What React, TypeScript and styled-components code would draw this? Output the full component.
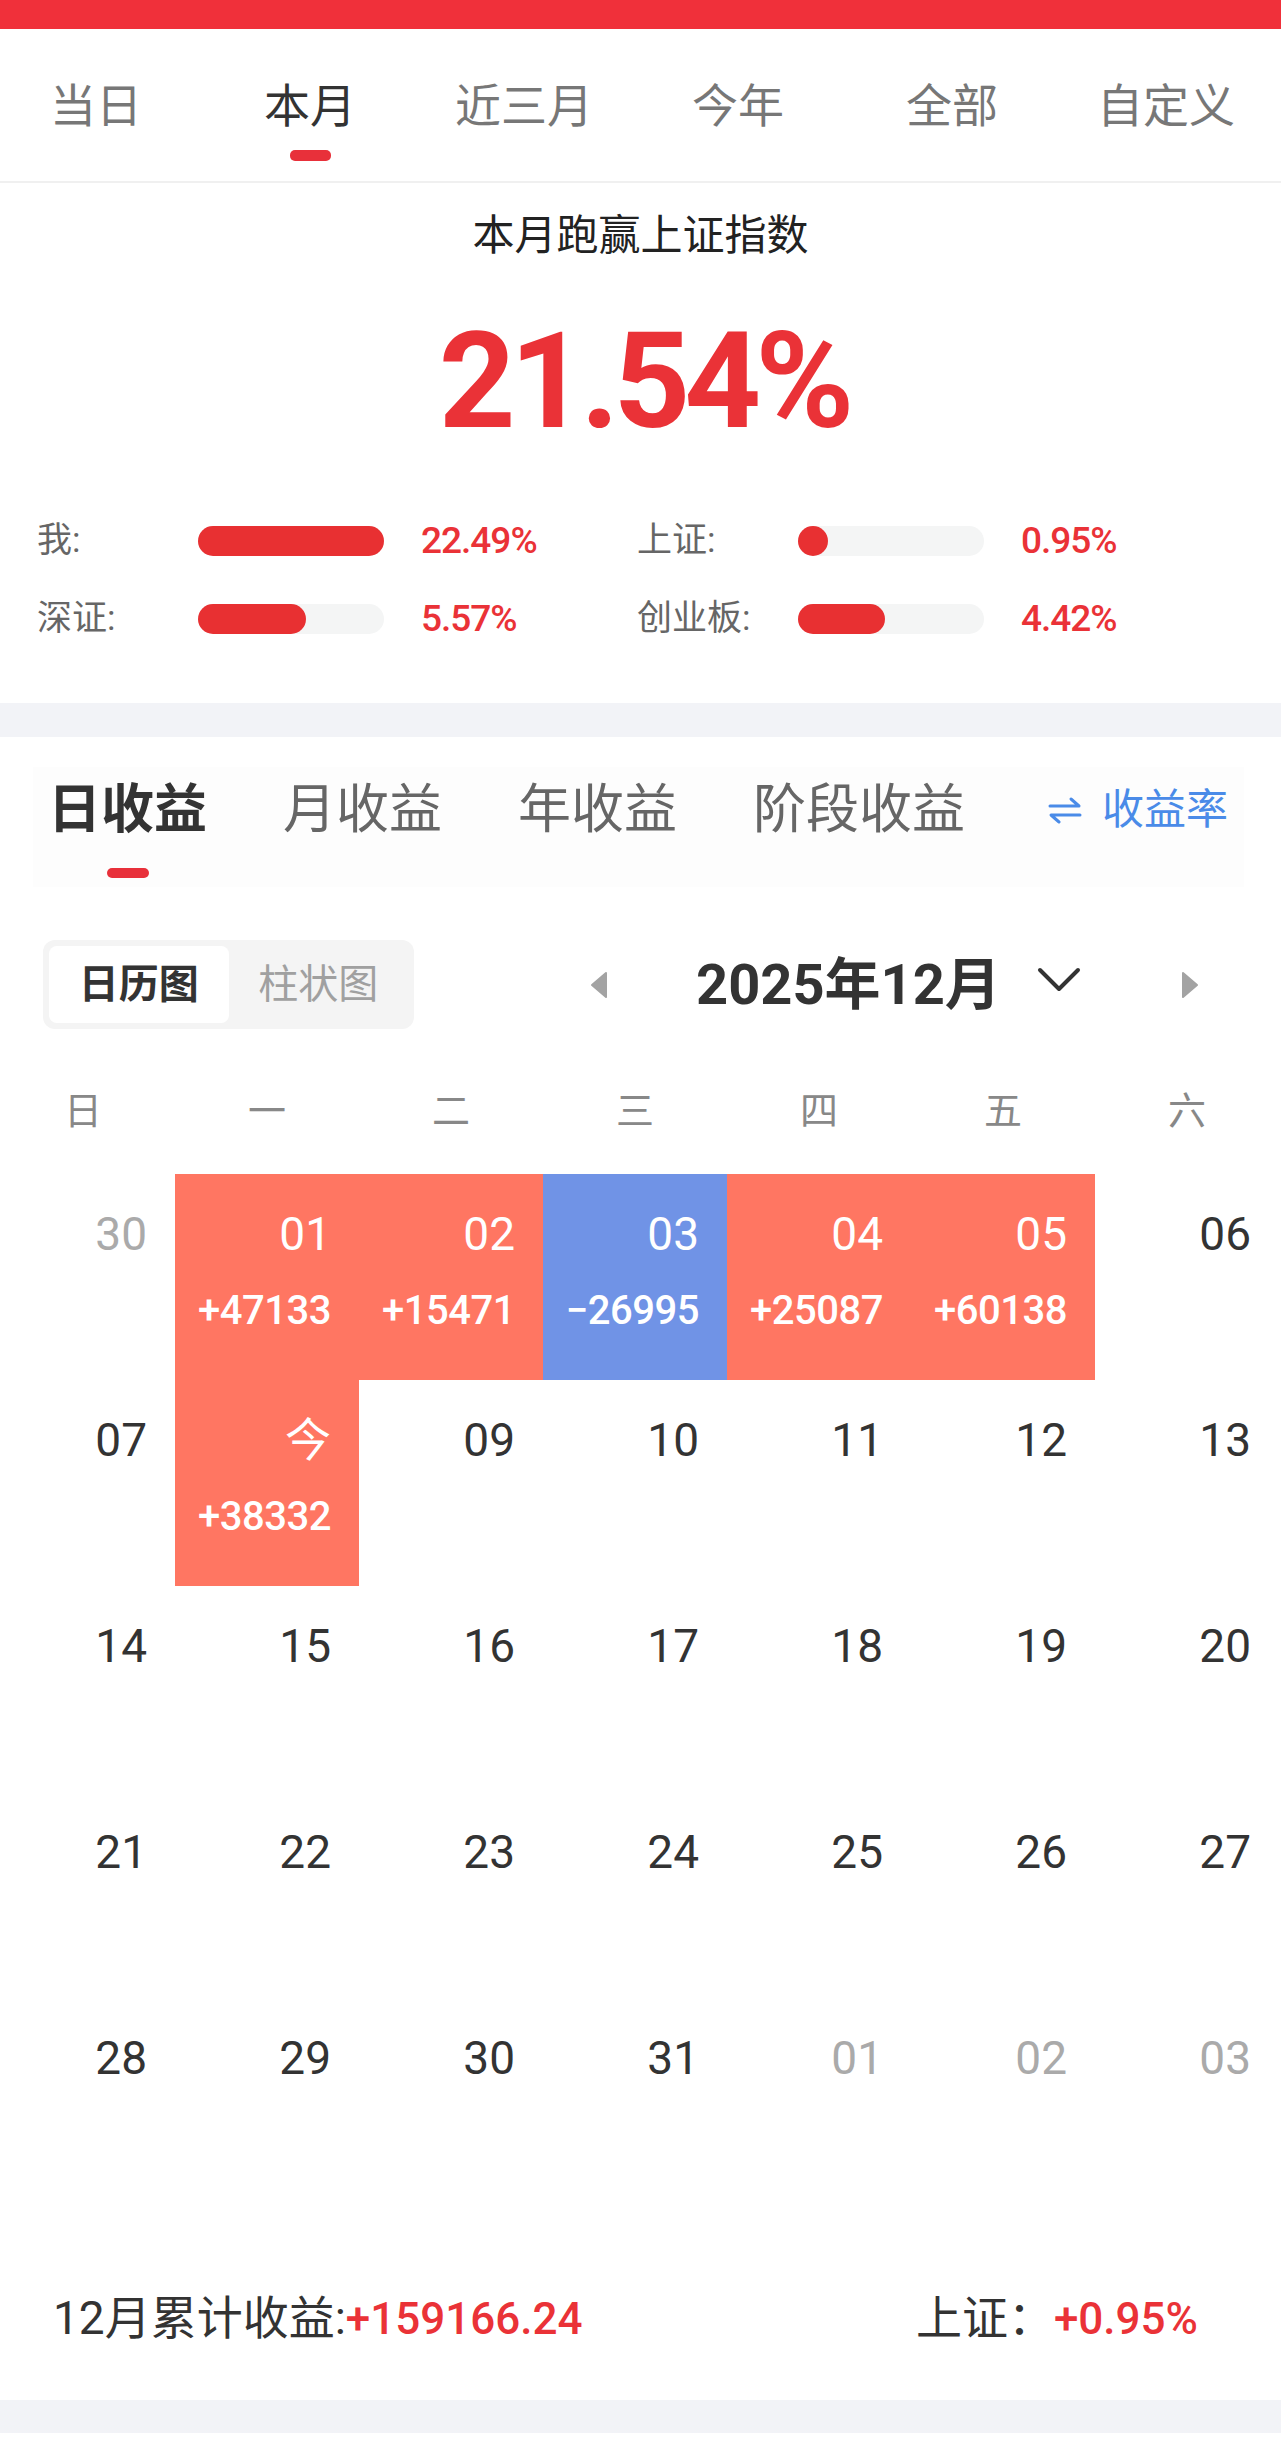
import styled, { createGlobalStyle } from "styled-components";

const GlobalStyle = createGlobalStyle`
  * { box-sizing: border-box; }
  html, body { margin: 0; background: #ffffff; overflow-x: hidden; }
  body { font-family: Roboto, "Noto Sans CJK SC", "Noto Sans", sans-serif; color: #333; }
`;

const RED = "#ea3237";
const SALMON = "#ff7662";
const BLUE = "#7093e6";

const periods = ["当日", "本月", "近三月", "今年", "全部", "自定义"];
const returnTabs = ["日收益", "月收益", "年收益", "阶段收益"];
const weekDays = ["日", "一", "二", "三", "四", "五", "六"];

type Stat = { label: string; value: string; fill: number };
const stats: Stat[] = [
  { label: "我:", value: "22.49%", fill: 100 },
  { label: "上证:", value: "0.95%", fill: 16 },
  { label: "深证:", value: "5.57%", fill: 58 },
  { label: "创业板:", value: "4.42%", fill: 47 },
];

type Day = { day: string; tone?: "muted" | "up" | "down"; amount?: string };
const days: Day[] = [
  { day: "30", tone: "muted" },
  { day: "01", tone: "up", amount: "+47133" },
  { day: "02", tone: "up", amount: "+15471" },
  { day: "03", tone: "down", amount: "\u221226995" },
  { day: "04", tone: "up", amount: "+25087" },
  { day: "05", tone: "up", amount: "+60138" },
  { day: "06" },
  { day: "07" },
  { day: "今", tone: "up", amount: "+38332" },
  ...["09", "10", "11", "12", "13"].map((d) => ({ day: d })),
  ...["14", "15", "16", "17", "18", "19", "20"].map((d) => ({ day: d })),
  ...["21", "22", "23", "24", "25", "26", "27"].map((d) => ({ day: d })),
  ...["28", "29", "30", "31"].map((d) => ({ day: d })),
  ...["01", "02", "03"].map((d) => ({ day: d, tone: "muted" as const })),
];

export default function App() {
  return (
    <>
      <GlobalStyle />
      <TopBar />

      <PeriodHeader>
        <PeriodList>
          {periods.map((p) => (
            <PeriodTab key={p} $active={p === "本月"}>
              <span>{p}</span>
              <Indicator $active={p === "本月"} />
            </PeriodTab>
          ))}
        </PeriodList>
      </PeriodHeader>

      <Summary>
        <SummaryTitle>本月跑赢上证指数</SummaryTitle>
        <BigValue>21.54%</BigValue>
        <StatsGrid>
          {stats.map((s) => (
            <StatRow key={s.label}>
              <StatLabel>{s.label}</StatLabel>
              <Track>
                <Fill style={{ width: `${s.fill}%` }} />
              </Track>
              <StatValue>{s.value}</StatValue>
            </StatRow>
          ))}
        </StatsGrid>
      </Summary>

      <Band />

      <ReturnTabs>
        {returnTabs.map((t, i) => (
          <ReturnTab key={t} $active={i === 0}>
            <span>{t}</span>
            <ReturnIndicator $active={i === 0} />
          </ReturnTab>
        ))}
        <RateSwitch>
          <svg width="36" height="28" viewBox="0 0 36 28" fill="none" stroke="currentColor" strokeWidth="3" strokeLinecap="round" strokeLinejoin="round">
            <path d="M3 10 H32 L24 3" />
            <path d="M33 19 H4 L12 26" />
          </svg>
          <span>收益率</span>
        </RateSwitch>
      </ReturnTabs>

      <ViewBar>
        <Toggle>
          <ToggleOption $active>日历图</ToggleOption>
          <ToggleOption>柱状图</ToggleOption>
        </Toggle>
        <NavArrow $side="left">
          <svg width="18" height="28" viewBox="0 0 18 28">
            <path d="M16 2 L2 14 L16 26 Z" fill="#a3a3a3" stroke="#a3a3a3" strokeWidth="2" strokeLinejoin="round" />
          </svg>
        </NavArrow>
        <MonthLabel>2025年12月</MonthLabel>
        <Chevron width="44" height="26" viewBox="0 0 44 26" fill="none" stroke="#333" strokeWidth="4" strokeLinecap="round" strokeLinejoin="round">
          <path d="M3 3 L22 22 L41 3" />
        </Chevron>
        <NavArrow $side="right">
          <svg width="18" height="28" viewBox="0 0 18 28">
            <path d="M2 2 L16 14 L2 26 Z" fill="#a3a3a3" stroke="#a3a3a3" strokeWidth="2" strokeLinejoin="round" />
          </svg>
        </NavArrow>
      </ViewBar>

      <WeekHeader>
        {weekDays.map((w) => (
          <span key={w}>{w}</span>
        ))}
      </WeekHeader>

      <CalendarGrid>
        {days.map((d, i) => (
          <DayCell key={i} $tone={d.tone}>
            <DayNum $tone={d.tone}>{d.day}</DayNum>
            {d.amount && <Amount>{d.amount}</Amount>}
          </DayCell>
        ))}
      </CalendarGrid>

      <Footer>
        <span>
          12月累计收益:<RedText>+159166.24</RedText>
        </span>
        <span>
          上证：<RedText>+0.95%</RedText>
        </span>
      </Footer>

      <Band $h={33} />
    </>
  );
}

const TopBar = styled.div`
  height: 29px;
  background: #f0303a;
`;

const PeriodHeader = styled.div`
  border-bottom: 2px solid #f0f0f0;
  padding: 54px 0 20px;
`;

const PeriodList = styled.div`
  display: flex;
  margin-left: -11px;
`;

const PeriodTab = styled.div<{ $active?: boolean }>`
  width: 214px;
  flex-shrink: 0;
  display: flex;
  flex-direction: column;
  align-items: center;
  font-size: 46px;
  line-height: 46px;
  white-space: nowrap;
  color: ${(p) => (p.$active ? "#333" : "#777")};
`;

const Indicator = styled.div<{ $active?: boolean }>`
  margin-top: 21px;
  width: 41px;
  height: 11px;
  border-radius: 5px;
  background: ${(p) => (p.$active ? "#e8303a" : "transparent")};
`;

const Summary = styled.div`
  padding-bottom: 64px;
`;

const SummaryTitle = styled.div`
  margin-top: 32px;
  font-size: 42px;
  line-height: 42px;
  text-align: center;
  color: #222;
`;

const BigValue = styled.div`
  margin-top: 58px;
  padding-left: 6px;
  font-size: 134px;
  line-height: 134px;
  font-weight: 700;
  letter-spacing: -6px;
  text-align: center;
  color: ${RED};
`;

const StatsGrid = styled.div`
  margin-top: 72px;
  padding-left: 37px;
  display: grid;
  grid-template-columns: 600px 600px;
  row-gap: 38px;
`;

const StatRow = styled.div`
  display: flex;
  align-items: center;
  height: 40px;
`;

const StatLabel = styled.span`
  width: 161px;
  font-size: 35px;
  line-height: 40px;
  white-space: nowrap;
  color: #666;
`;

const Track = styled.div`
  width: 186px;
  height: 30px;
  border-radius: 15px;
  background: #f4f5f5;
  display: flex;
`;

const Fill = styled.div`
  height: 30px;
  min-width: 30px;
  border-radius: 15px;
  background: #e83032;
`;

const StatValue = styled.span`
  margin-left: 37px;
  font-size: 37px;
  line-height: 40px;
  font-weight: 500;
  letter-spacing: -1px;
  color: ${RED};
`;

const Band = styled.div<{ $h?: number }>`
  height: ${(p) => p.$h ?? 34}px;
  background: #f2f3f7;
`;

const ReturnTabs = styled.div`
  margin: 30px 37px 0 33px;
  padding: 16px 16px 9px 15px;
  background: #fdfdfd;
  display: flex;
  align-items: flex-start;
`;

const ReturnTab = styled.div<{ $active?: boolean }>`
  flex-shrink: 0;
  display: flex;
  flex-direction: column;
  align-items: center;
  margin-right: 76px;
  font-size: 53px;
  line-height: 54px;
  white-space: nowrap;
  font-weight: ${(p) => (p.$active ? 700 : 400)};
  color: ${(p) => (p.$active ? "#333" : "#666")};
`;

const ReturnIndicator = styled.div<{ $active?: boolean }>`
  margin-top: 31px;
  width: 42px;
  height: 10px;
  border-radius: 5px;
  background: ${(p) => (p.$active ? "#e8303a" : "transparent")};
`;

const RateSwitch = styled.div`
  margin-left: auto;
  flex-shrink: 0;
  height: 54px;
  display: flex;
  align-items: center;
  gap: 19px;
  font-size: 42px;
  line-height: 54px;
  white-space: nowrap;
  color: #4a8be8;
`;

const ViewBar = styled.div`
  margin-top: 53px;
  padding-left: 43px;
  height: 89px;
  display: flex;
  align-items: center;
`;

const Toggle = styled.div`
  flex-shrink: 0;
  width: 371px;
  height: 89px;
  padding: 6px;
  border-radius: 12px;
  background: #f4f4f4;
  display: flex;
`;

const ToggleOption = styled.div<{ $active?: boolean }>`
  flex: 1;
  border-radius: 8px;
  text-align: center;
  font-size: 40px;
  line-height: 77px;
  white-space: nowrap;
  background: ${(p) => (p.$active ? "#ffffff" : "transparent")};
  font-weight: ${(p) => (p.$active ? 700 : 400)};
  color: ${(p) => (p.$active ? "#333" : "#a0a0a0")};
`;

const NavArrow = styled.div<{ $side: "left" | "right" }>`
  display: flex;
  flex-shrink: 0;
  margin-left: ${(p) => (p.$side === "left" ? 176 : 100)}px;
`;

const MonthLabel = styled.span`
  margin-left: 88px;
  font-size: 56px;
  line-height: 56px;
  font-weight: 700;
  white-space: nowrap;
  color: #333;
`;

const Chevron = styled.svg`
  flex-shrink: 0;
  margin-left: 36px;
  margin-top: -10px;
`;

const WeekHeader = styled.div`
  margin-top: 42px;
  margin-left: -9px;
  display: grid;
  grid-template-columns: repeat(7, 184px);
  height: 80px;
  span {
    text-align: center;
    font-size: 38px;
    line-height: 80px;
    color: #888;
  }
`;

const CalendarGrid = styled.div`
  margin-top: 23px;
  margin-left: -9px;
  display: grid;
  grid-template-columns: repeat(7, 184px);
  grid-auto-rows: 206px;
`;

const DayCell = styled.div<{ $tone?: string }>`
  padding: 36px 28px 0 0;
  display: flex;
  flex-direction: column;
  align-items: flex-end;
  background: ${(p) => (p.$tone === "up" ? SALMON : p.$tone === "down" ? BLUE : "transparent")};
`;

const DayNum = styled.span<{ $tone?: string }>`
  font-size: 46px;
  line-height: 48px;
  color: ${(p) => (p.$tone === "muted" ? "#aaa" : p.$tone ? "#fff" : "#333")};
`;

const Amount = styled.span`
  margin-top: 33px;
  font-size: 40px;
  line-height: 40px;
  font-weight: 500;
  letter-spacing: -0.5px;
  color: #fff;
`;

const Footer = styled.div`
  padding: 92px 83px 59px 53px;
  display: flex;
  justify-content: space-between;
  font-size: 46px;
  line-height: 44px;
  white-space: nowrap;
  color: #333;
`;

const RedText = styled.span`
  font-size: 44px;
  font-weight: 500;
  color: ${RED};
`;
